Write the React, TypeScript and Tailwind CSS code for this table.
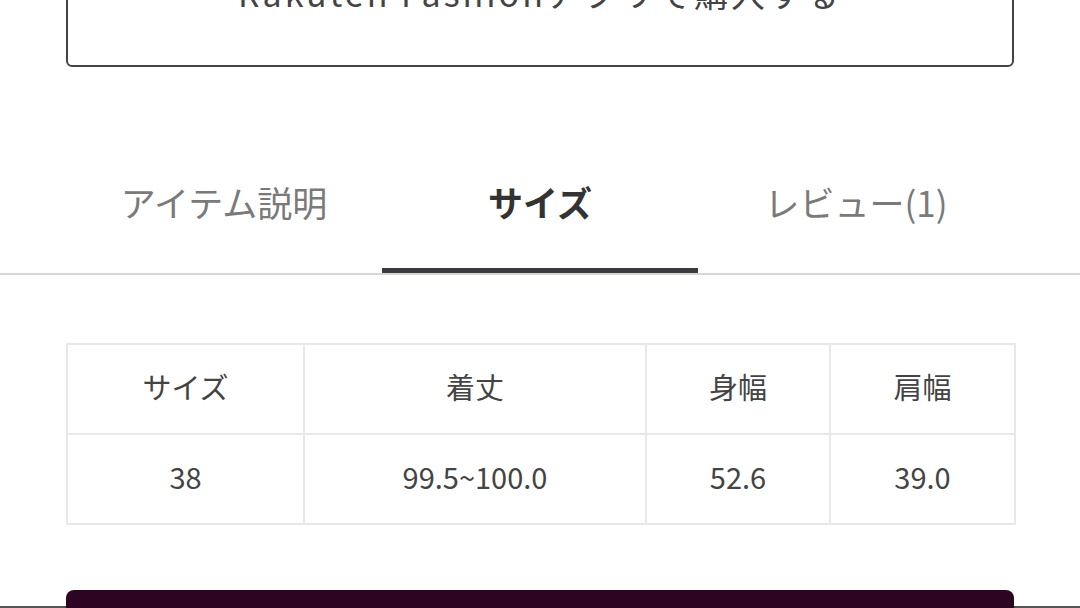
const font = { fontFamily: '"Noto Sans CJK JP", "Noto Sans", sans-serif' };

const tabs = ["アイテム説明", "サイズ", "レビュー(1)"];
const head = ["サイズ", "着丈", "身幅", "肩幅"];
const row = ["38", "99.5~100.0", "52.6", "39.0"];
const widths = ["w-[237px]", "w-[342px]", "w-[184px]", "w-[185px]"];

export default function App() {
  const active = 1;
  return (
    <div className="w-[1080px] h-[608px] overflow-hidden bg-white flex flex-col" style={font}>
      <div className="px-[66px]">
        <div className="-mt-[80px] h-[147px] border-2 border-[#444] rounded-md flex items-end justify-center pb-[55px]">
          <span className="text-[34px] leading-[34px] tracking-[3px] text-[#444]">Rakuten Fashionアプリで購入する</span>
        </div>
      </div>

      <div className="mt-[99px] px-[66px] border-b-2 border-[#d6d6d6] flex">
        {tabs.map((t, i) => (
          <div
            key={t}
            className={`flex-1 flex justify-center pt-[19px] pb-[49px] border-b-[5px] ${
              i === active ? "border-[#3a3a40] font-bold text-[#333]" : "border-transparent text-[#7a7a7a]"
            }`}
          >
            <span className="text-[35px] leading-[34px]">{t}</span>
          </div>
        ))}
      </div>

      <div className="mt-[68px] px-[66px]">
        <table className="w-[947px] table-fixed border-collapse text-[29px] text-[#444]">
          <colgroup>
            {widths.map((w, i) => (
              <col key={i} className={w} />
            ))}
          </colgroup>
          <tbody>
            <tr>
              {head.map((h) => (
                <td key={h} className="h-[90px] pb-[5px] border-2 border-[#e8e8e8] text-center align-middle">
                  {h}
                </td>
              ))}
            </tr>
            <tr>
              {row.map((v) => (
                <td key={v} className="h-[90px] pb-[5px] border-2 border-[#e8e8e8] text-center align-middle">
                  {v}
                </td>
              ))}
            </tr>
          </tbody>
        </table>
      </div>

      <div className="mt-[65px] flex-1 px-[66px] border-b-2 border-[#555] flex">
        <div className="flex-1 bg-[#2d0522] rounded-t-lg -mb-[2px] relative"></div>
      </div>
    </div>
  );
}
